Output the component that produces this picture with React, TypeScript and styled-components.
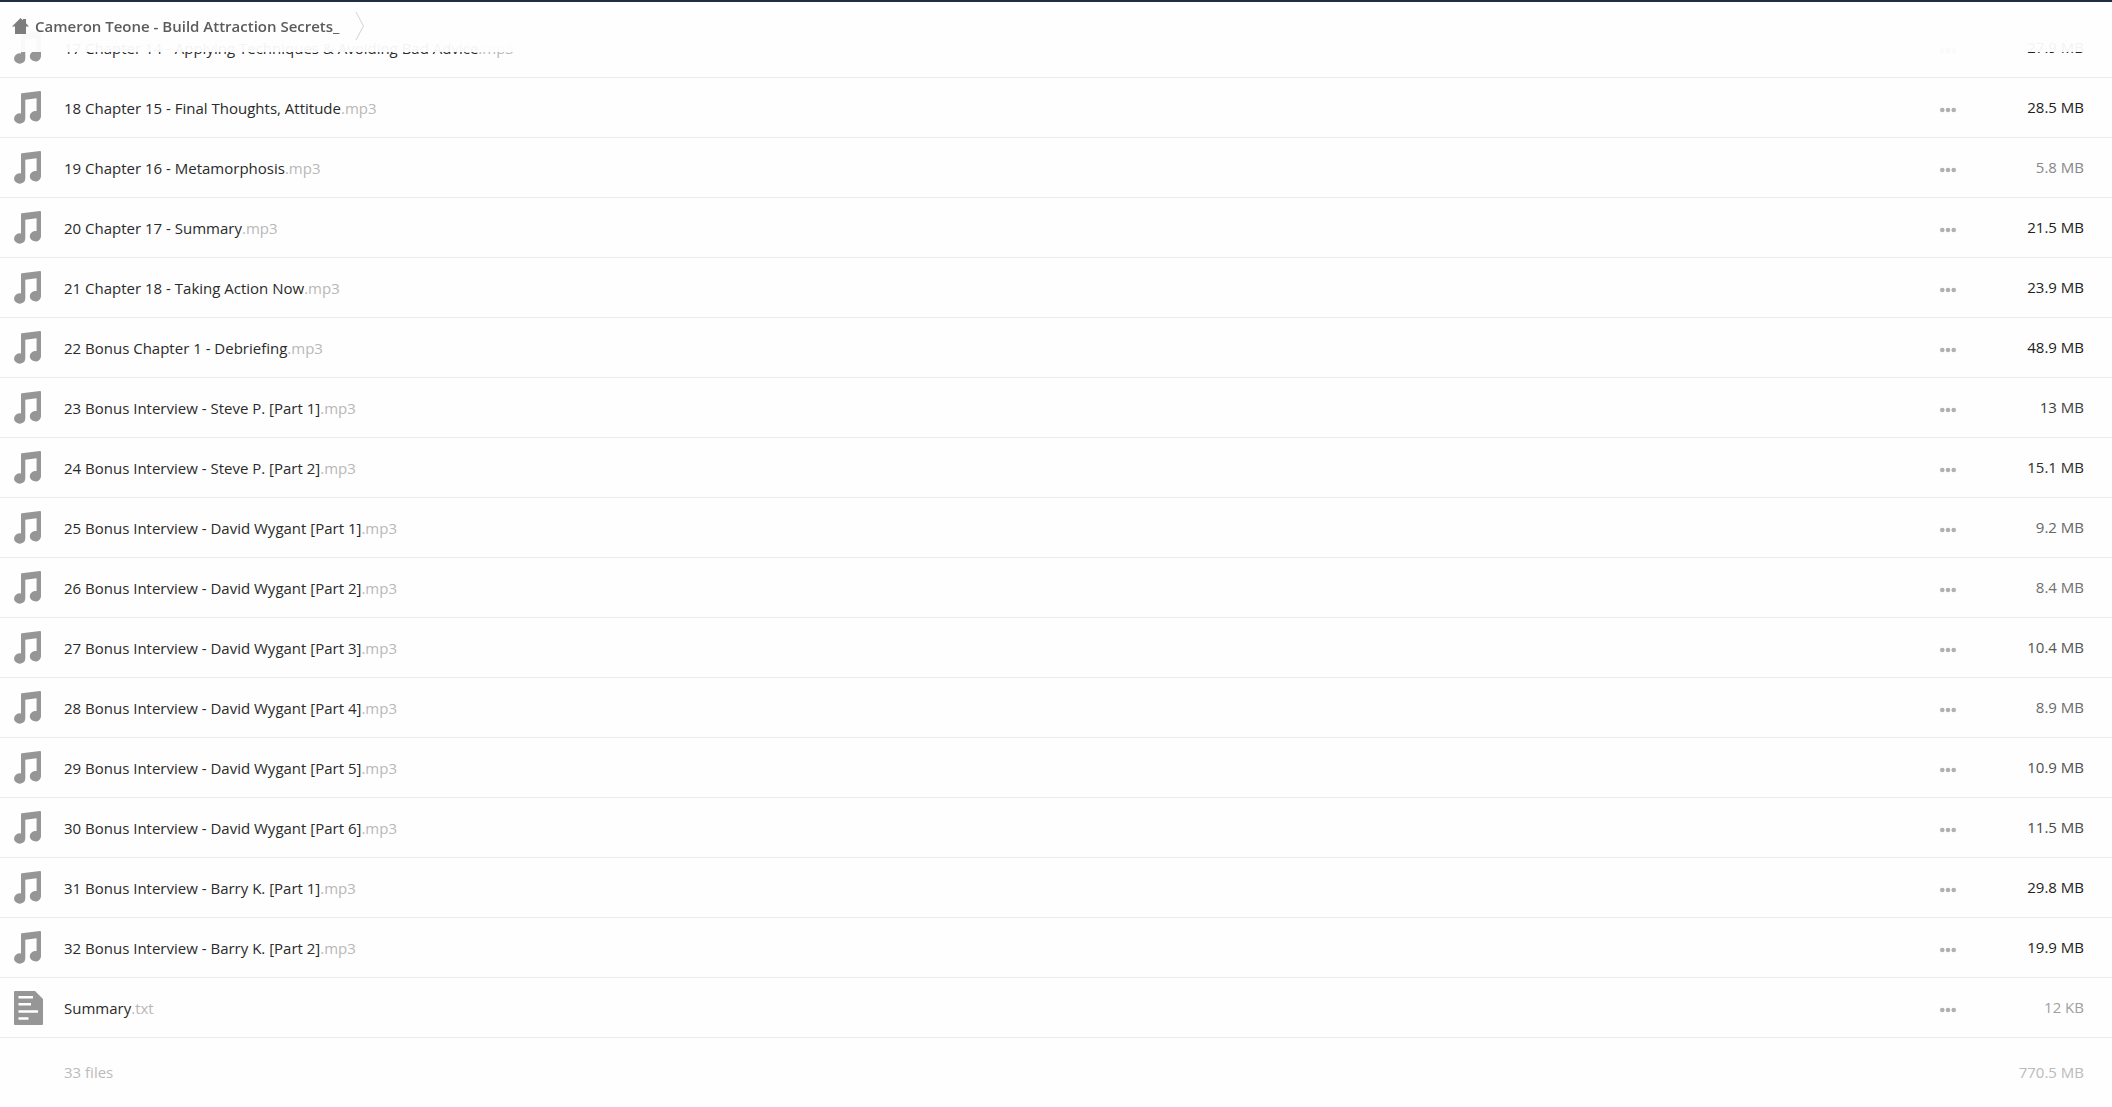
import React from 'react';
import styled, { createGlobalStyle } from 'styled-components';

const GlobalStyle = createGlobalStyle`
  * { box-sizing: border-box; }
  body {
    margin: 0;
    background: #fefefe;
    font-family: "Open Sans", "Noto Sans", sans-serif;
    font-size: 15px;
    line-height: 20px;
    color: #2a2a2a;
  }
`;

const Page = styled.div`
  display: flex;
  flex-direction: column;
  justify-content: flex-end;
  height: 100vh;
  overflow: hidden;
`;

const Header = styled.header`
  position: fixed;
  top: 0;
  left: 0;
  right: 0;
  z-index: 1;
  display: flex;
  align-items: center;
  gap: 16px;
  height: 52px;
  padding: 0 12px 2px;
  border-top: 2px solid #1f2d47;
  background: rgba(254, 254, 254, 0.95);
`;

const Crumb = styled.a`
  display: flex;
  align-items: center;
  gap: 6px;
  color: #5c5c5c;
  font-weight: 600;
  text-decoration: none;
`;

const Files = styled.table`
  flex-shrink: 0;
  width: 100%;
  border-collapse: separate;
  border-spacing: 0;
  table-layout: fixed;
`;

const Cell = styled.td`
  height: 60px;
  padding: 0;
  border-bottom: 1px solid #ebebeb;
  vertical-align: middle;
`;

const IconCell = styled(Cell)`
  width: 64px;
  padding-left: 14px;
  svg { display: block; }
`;

const NameCell = styled(Cell)`
  overflow: hidden;
  white-space: nowrap;
  text-overflow: ellipsis;
`;

const MenuCell = styled(Cell)`
  width: 40px;
  padding-top: 4px;
`;

const SizeCell = styled(Cell)<{ $tone: string }>`
  width: 140px;
  padding: 0 28px 2px 0;
  color: ${(p) => p.$tone};
  text-align: right;
`;

const Extension = styled.span`
  color: #b8b8b8;
`;

const MoreButton = styled.button`
  display: flex;
  align-items: center;
  justify-content: center;
  width: 32px;
  height: 24px;
  padding: 0;
  border: 0;
  background: none;
  color: #b0b0b0;
  cursor: pointer;
`;

const Totals = styled.footer`
  display: flex;
  flex-shrink: 0;
  justify-content: space-between;
  height: 69px;
  padding: 24px 28px 0 64px;
  color: #bbb;
`;

const HomeIcon = () => (
  <svg width="17" height="16" viewBox="0 0 17 16" fill="#7d7d7d" aria-hidden="true">
    <path d="M8.5 0 11 2.3V1h3v4.2L17 8.6h-3V16H3V8.6H0Z" />
  </svg>
);

const Chevron = () => (
  <svg width="10" height="28" viewBox="0 0 10 28" fill="none" stroke="#d2d2d2" aria-hidden="true">
    <path d="M1 0 8.5 14 1 28" />
  </svg>
);

const MusicIcon = () => (
  <svg width="27" height="33" viewBox="0 0 27 33" fill="#969696" aria-hidden="true">
    <path d="M7 3.2Q7 2.4 7.8 2.3L26 0Q27 0 27 1V25A5.6 5.2 0 1 1 22.6 20.1V7.2L11.3 8.8V27.4A5.6 5.2 0 1 1 7 22.5Z" />
  </svg>
);

const TextIcon = () => (
  <svg width="29" height="34" viewBox="0 0 29 34" aria-hidden="true">
    <path fill="#969696" d="M1 0H21L29 8V33Q29 34 28 34H1Q0 34 0 33V1Q0 0 1 0Z" />
    <path stroke="#fff" strokeWidth="2.4" d="M4.5 6.3H19M4.5 13.3H17M4.5 20.5H24M4.5 27.5H14.5" />
  </svg>
);

const Dots = () => (
  <svg width="16" height="6" viewBox="0 0 16 6" fill="currentColor" aria-hidden="true">
    <circle cx="2.3" cy="3" r="2.3" />
    <circle cx="8" cy="3" r="2.3" />
    <circle cx="13.7" cy="3" r="2.3" />
  </svg>
);

type FileEntry = { name: string; ext: string; size: string; tone: string };

const mp3 = (name: string, size: string, tone: string): FileEntry => ({ name, ext: '.mp3', size, tone });

const files: FileEntry[] = [
  mp3('17 Chapter 14 - Applying Techniques & Avoiding Bad Advice', '27.9 MB', '#222'),
  mp3('18 Chapter 15 - Final Thoughts, Attitude', '28.5 MB', '#222'),
  mp3('19 Chapter 16 - Metamorphosis', '5.8 MB', '#888'),
  mp3('20 Chapter 17 - Summary', '21.5 MB', '#222'),
  mp3('21 Chapter 18 - Taking Action Now', '23.9 MB', '#222'),
  mp3('22 Bonus Chapter 1 - Debriefing', '48.9 MB', '#222'),
  mp3('23 Bonus Interview - Steve P. [Part 1]', '13 MB', '#3c3c3c'),
  mp3('24 Bonus Interview - Steve P. [Part 2]', '15.1 MB', '#2c2c2c'),
  mp3('25 Bonus Interview - David Wygant [Part 1]', '9.2 MB', '#666'),
  mp3('26 Bonus Interview - David Wygant [Part 2]', '8.4 MB', '#707070'),
  mp3('27 Bonus Interview - David Wygant [Part 3]', '10.4 MB', '#555'),
  mp3('28 Bonus Interview - David Wygant [Part 4]', '8.9 MB', '#6a6a6a'),
  mp3('29 Bonus Interview - David Wygant [Part 5]', '10.9 MB', '#505050'),
  mp3('30 Bonus Interview - David Wygant [Part 6]', '11.5 MB', '#4a4a4a'),
  mp3('31 Bonus Interview - Barry K. [Part 1]', '29.8 MB', '#222'),
  mp3('32 Bonus Interview - Barry K. [Part 2]', '19.9 MB', '#222'),
  { name: 'Summary', ext: '.txt', size: '12 KB', tone: '#a0a0a0' },
];

export default function App() {
  return (
    <Page>
      <GlobalStyle />
      <Header>
        <Crumb href="#">
          <HomeIcon />
          Cameron Teone - Build Attraction Secrets_
        </Crumb>
        <Chevron />
      </Header>
      <Files>
        <tbody>
          {files.map((file) => (
            <tr key={file.name}>
              <IconCell>{file.ext === '.txt' ? <TextIcon /> : <MusicIcon />}</IconCell>
              <NameCell>
                {file.name}
                <Extension>{file.ext}</Extension>
              </NameCell>
              <MenuCell>
                <MoreButton aria-label="More">
                  <Dots />
                </MoreButton>
              </MenuCell>
              <SizeCell $tone={file.tone}>{file.size}</SizeCell>
            </tr>
          ))}
        </tbody>
      </Files>
      <Totals>
        <span>33 files</span>
        <span>770.5 MB</span>
      </Totals>
    </Page>
  );
}
